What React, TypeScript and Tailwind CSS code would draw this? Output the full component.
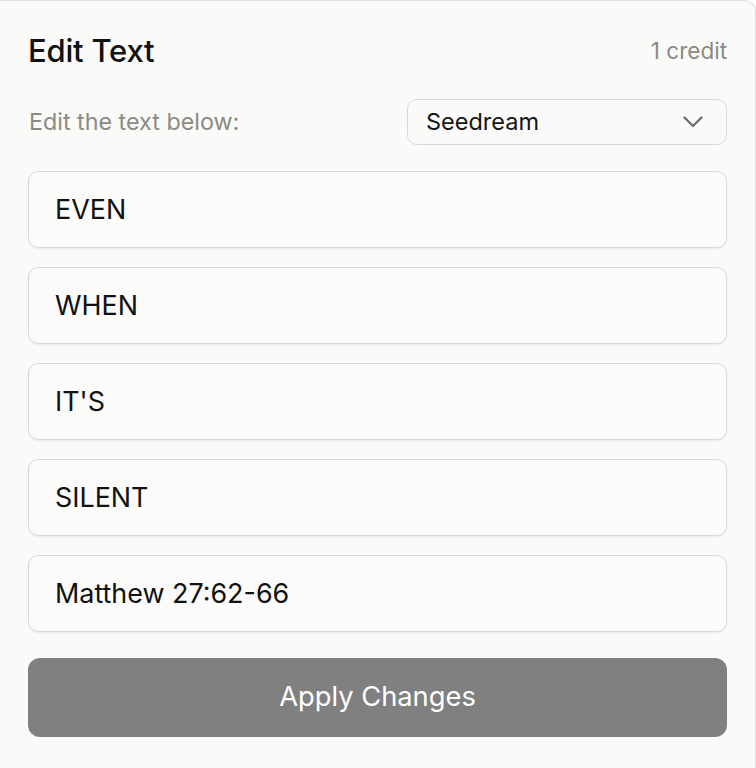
import React from "react";

const items = ["EVEN", "WHEN", "IT'S", "SILENT", "Matthew 27:62-66"];

export default function App() {
  return (
    <div
      className="w-[756px] h-[768px] bg-[#fafaf8] border-t border-r border-[#dededc] rounded-tr-[12px] overflow-hidden"
      style={{ fontFamily: "Inter, 'Liberation Sans', sans-serif" }}
    >
      <div className="px-[28px]">
        <div className="pt-[29px] h-[70px] flex items-center justify-between">
          <h1 className="text-[31px] leading-[40px] font-medium text-[#111111] tracking-[-0.2px]">Edit Text</h1>
          <span className="text-[22.5px] text-[#8b8b84]">1 credit</span>
        </div>
        <div className="mt-[28px] h-[46px] flex items-center justify-between">
          <span className="text-[23.3px] text-[#8b8b84] pl-[1px]">Edit the text below:</span>
          <button className="w-[320px] h-[46px] rounded-[10px] border border-[#d9d9d7] bg-[#fafaf9] flex items-center justify-between pl-[18px] pr-[23px]">
            <span className="text-[23.5px] text-[#151515]">Seedream</span>
            <svg width="20" height="12" viewBox="0 0 20 12" fill="none">
              <polyline points="1.5,1.5 10,10 18.5,1.5" stroke="#6b6b6b" strokeWidth="2.2" strokeLinecap="round" strokeLinejoin="round" />
            </svg>
          </button>
        </div>
        <div className="mt-[26px] flex flex-col gap-[19px]">
          {items.map((t) => (
            <div
              key={t}
              className="h-[77px] rounded-[10px] border border-[#d9d9d7] bg-[#fbfbfa] shadow-[0_1px_2px_rgba(0,0,0,0.07)] flex items-center pl-[26px]"
            >
              <span className="text-[26.9px] text-[#111111]">{t}</span>
            </div>
          ))}
        </div>
        <button className="mt-[26px] w-full h-[79px] rounded-[12px] bg-[#808080] flex items-center justify-center">
          <span className="text-[27.3px] text-white">Apply Changes</span>
        </button>
      </div>
    </div>
  );
}
